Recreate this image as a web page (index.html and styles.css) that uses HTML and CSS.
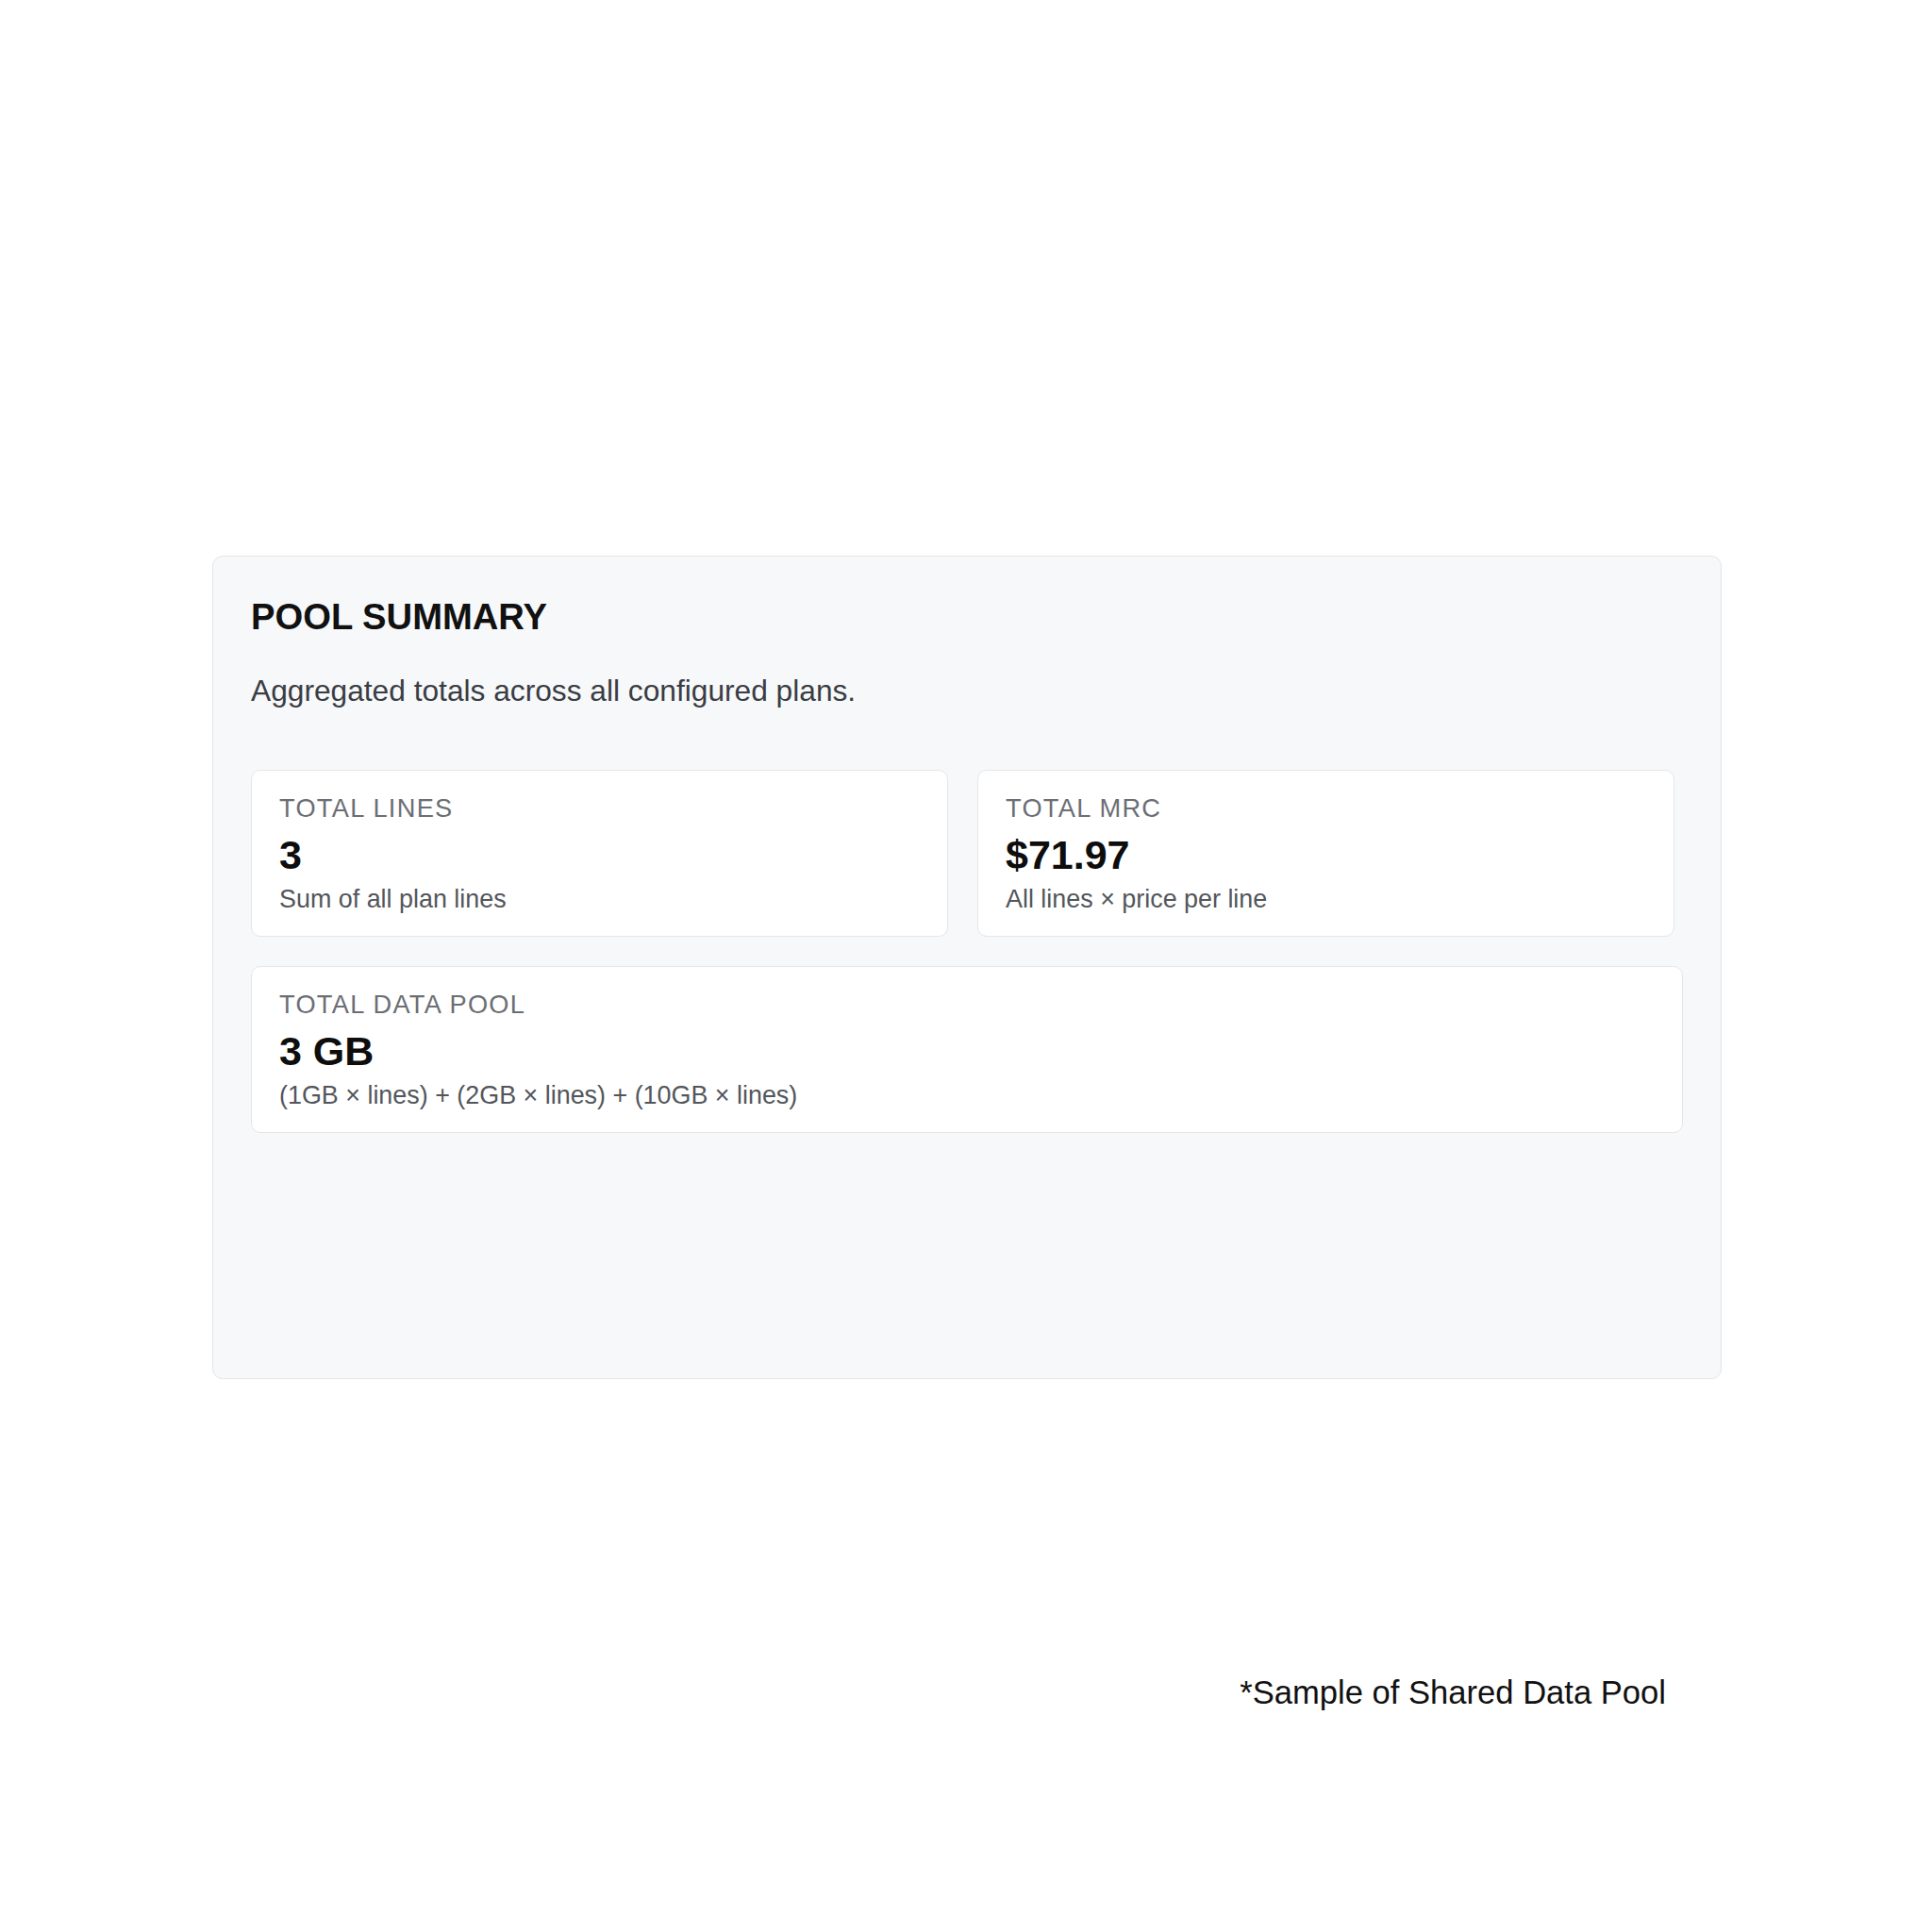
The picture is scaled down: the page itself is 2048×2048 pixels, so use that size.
FILE: index.html
```html
<!DOCTYPE html>
<html lang="en">
<head>
<meta charset="utf-8">
<title>Pool Summary</title>
<link rel="stylesheet" href="styles.css">
</head>
<body>
<main class="page">
  <section class="panel">
    <h2 class="panel-title">POOL SUMMARY</h2>
    <p class="panel-sub">Aggregated totals across all configured plans.</p>
    <div class="stat-row">
      <div class="stat-card">
        <div class="stat-label">TOTAL LINES</div>
        <div class="stat-value">3</div>
        <div class="stat-desc">Sum of all plan lines</div>
      </div>
      <div class="stat-card">
        <div class="stat-label">TOTAL MRC</div>
        <div class="stat-value">$71.97</div>
        <div class="stat-desc">All lines × price per line</div>
      </div>
    </div>
    <div class="stat-card stat-card-wide">
      <div class="stat-label">TOTAL DATA POOL</div>
      <div class="stat-value">3 GB</div>
      <div class="stat-desc">(1GB × lines) + (2GB × lines) + (10GB × lines)</div>
    </div>
  </section>
  <p class="footnote">*Sample of Shared Data Pool</p>
</main>
</body>
</html>
```

FILE: styles.css
```css
html, body {
  margin: 0;
  padding: 0;
  background: #ffffff;
}

body {
  font-family: "Liberation Sans", Arial, sans-serif;
}

.page {
  width: 1600px;
  padding: 589px 0 0 225px;
}

.panel {
  box-sizing: border-box;
  width: 1600px;
  height: 873px;
  background: #f7f8fa;
  border: 1px solid #e3e5e8;
  border-radius: 11px;
  padding: 41px 40px 0;
  overflow: hidden;
}

.panel-title {
  margin: 0;
  font-size: 38.2px;
  line-height: 45.6px;
  font-weight: 700;
  color: #111111;
}

.panel-sub {
  margin: 36px 0 0;
  font-size: 31.7px;
  line-height: 38.4px;
  color: #3a3d44;
}

.stat-row {
  margin-top: 65px;
  margin-right: 9px;
  display: grid;
  grid-template-columns: 1fr 1fr;
  column-gap: 31px;
}

.stat-card {
  box-sizing: border-box;
  background: #ffffff;
  border: 1px solid #e4e6e9;
  border-radius: 10px;
  padding: 24px 29px 24.5px;
}

.stat-card-wide {
  margin-top: 31px;
}

.stat-label {
  font-size: 27.2px;
  line-height: 32px;
  letter-spacing: 1.3px;
  color: #6b6e74;
}

.stat-value {
  margin-top: 8px;
  font-size: 43px;
  line-height: 50px;
  font-weight: 700;
  color: #0d0d0d;
}

.stat-desc {
  margin-top: 6.5px;
  font-size: 26.9px;
  line-height: 30px;
  color: #53565c;
}

.footnote {
  margin: 312px 0 0;
  padding-right: 59px;
  text-align: right;
  font-size: 34.6px;
  line-height: 40px;
  color: #111111;
}
```
